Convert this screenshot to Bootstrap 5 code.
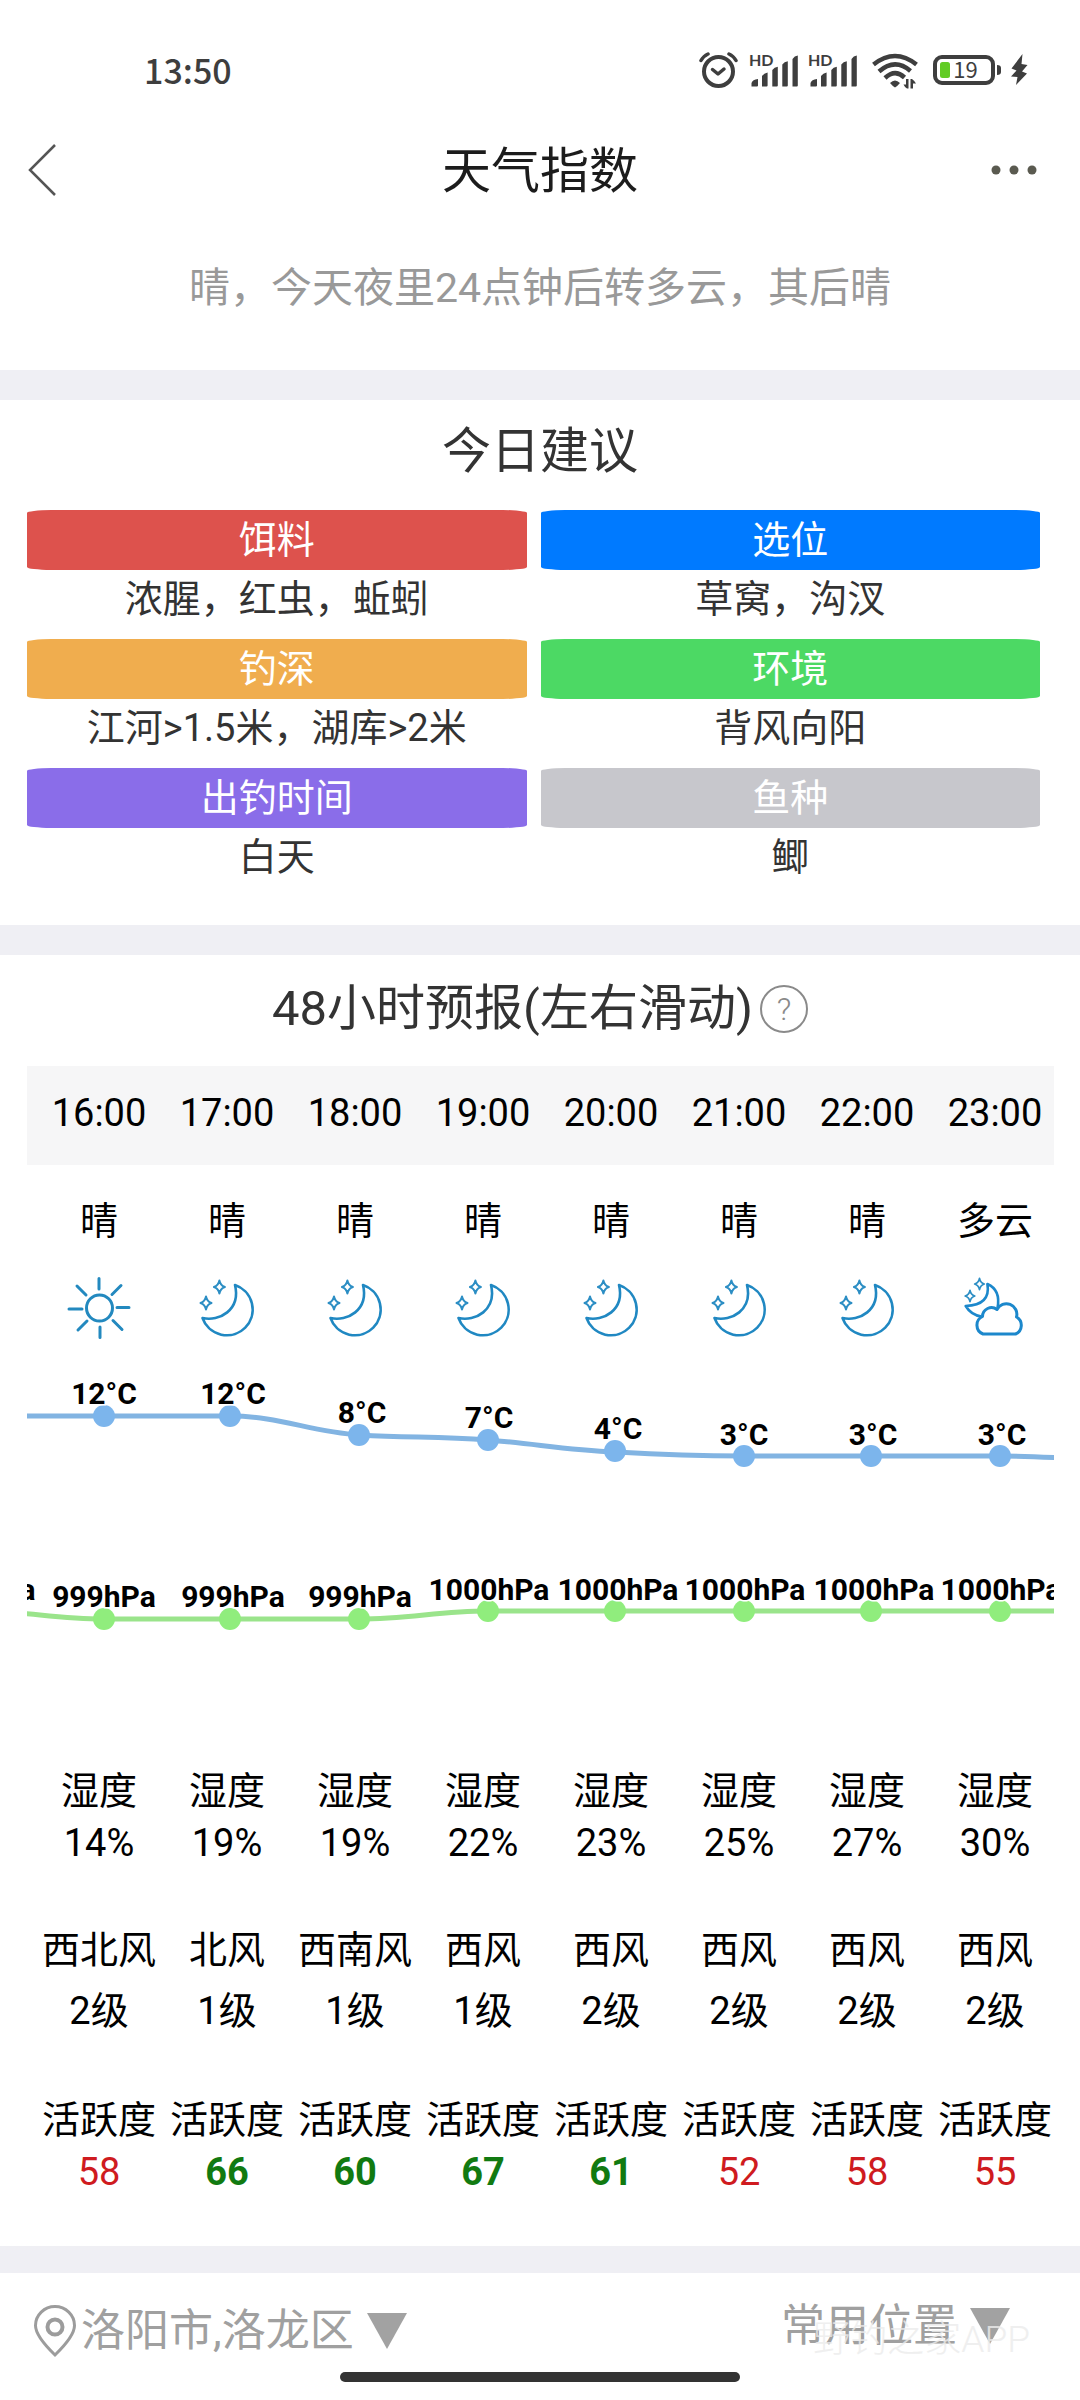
<!DOCTYPE html>
<html lang="zh-CN">
<head>
<meta charset="utf-8">
<meta name="viewport" content="width=device-width, initial-scale=1">
<title>天气指数</title>
<link rel="stylesheet" href="https://cdn.jsdelivr.net/npm/bootstrap@5.3.0/dist/css/bootstrap.min.css">
<style>
  body { font-family: Roboto, "Noto Sans CJK SC", sans-serif; color: #333; background: #fff; }
  svg { display: block; flex-shrink: 0; }
  .status-bar { height: 140px; padding: 0 52px 0 144px; color: #3e3e3e; }
  .status-time { font: 500 34px/44px "Noto Sans CJK SC", sans-serif; }
  .status-icons { gap: 10px; }
  .status-icons text { font-family: Lato, sans-serif; font-size: 16px; font-weight: 700; fill: #3e3e3e; }
  .status-icons .level { font-family: "Noto Sans CJK SC", sans-serif; font-size: 22px; font-weight: 400; text-anchor: middle; }
  .title-bar { height: 64px; padding: 0 28px; }
  .title-bar h1 { font-size: 49px; line-height: 64px; font-weight: 400; color: #1c1c1c; }
  .bar-side { flex: 1 1 0; }
  .summary { font-size: 41px; line-height: 60px; padding: 54px 24px 52px; color: #999; }
  .divider { height: 30px; background: #efeff4; }
  .divider-foot { height: 27px; }
  .section-title { font-size: 49px; line-height: 60px; font-weight: 400; color: #333; }
  .title-tips { padding: 22px 0 28px; }
  .title-hours { padding: 24px 0 27px; gap: 7px; }
  .help-btn { width: 48px; height: 48px; border: 2px solid #8a8a8a; color: #8a8a8a; font-size: 32px; line-height: 44px; font-weight: 300; background: none; }
  .tips { display: grid; grid-template-columns: 1fr 1fr; gap: 11px 14px; padding: 0 40px 39px 27px; }
  .tip-label { height: 60px; line-height: 60px; font-size: 38px; font-weight: 400; color: #fff; border-radius: 24px / 3px; }
  .tip-text { line-height: 58px; font-size: 38px; color: #333; }
  .bait { background: #dd524d; } .spot { background: #007aff; } .depth { background: #f0ad4e; }
  .place { background: #4cd964; } .when { background: #8a6de9; } .fish { background: #c7c7cc; }
  .hours { margin: 0 26px 0 27px; overflow-x: auto; scrollbar-width: none; }
  .hours::-webkit-scrollbar { display: none; }
  .hours table { width: 1024px; margin-left: 8px; table-layout: fixed; font-size: 38px; color: #000; --bs-table-color: #000; --bs-table-bg: transparent; }
  .hours th, .hours td { padding: 0; font-weight: 400; text-align: center; vertical-align: middle; white-space: nowrap; }
  .hours thead th { height: 99px; padding-bottom: 4px; background: #f6f6f7; }
  .hours thead { box-shadow: -8px 0 0 #f6f6f7; }
  .row-sky td { height: 112px; }
  .row-icon td { height: 62px; }
  .row-icon svg { width: 64px; height: 62px; margin: 0 auto; }
  .row-humidity td { line-height: 52px; padding: 28px 0; }
  .row-wind td { line-height: 61px; padding: 23px 0; }
  .row-active td { line-height: 52px; padding: 29px 0 48px; }
  .low { color: #cf1b20; } .high { color: #117a11; font-weight: 700; }
  .trend { width: 1024px; height: 398px; overflow: visible; }
  .trend text { font: 700 30px Roboto, sans-serif; text-anchor: middle; fill: #000; stroke: #fff; stroke-width: 3px; paint-order: stroke; }
  .foot { height: 99px; padding: 23px 67px 0 33px; }
  .place-btn { border: 0; background: none; padding: 0; font-size: 44px; line-height: 60px; color: #a0a0a0; }
  .current { padding-top: 5px; }
  .watermark { position: absolute; right: 50px; top: 45px; font-size: 37px; line-height: 44px; font-weight: 300; color: #ececec; opacity: .8; pointer-events: none; }
  .home-bar { width: 37%; height: 10px; margin: 0 auto 17px; background: #333; }
</style>
</head>
<body>
<svg width="0" height="0" class="position-absolute" aria-hidden="true">
  <symbol id="bars" viewBox="0 0 49 44">
    <path fill="#3e3e3e" d="M2.500 38.500V35q1-3.500 6.500-4v6.500q0 1-1 1zM13 38.500V28q2-3 5.600-3.500v13q0 1-1 1H13zM23.300 38.500V22q2-3 5.500-3.200v18.700q0 1-1 1h-4.500zM33.300 38.500V16.500q2-3 5.500-3.200v24.200q0 1-1 1h-4.500zM43.500 38.500V11q2-3 5.300-3.400v29.900q0 1-1 1h-4.300z"/>
  </symbol>
  <symbol id="star" viewBox="-8 -9 16 18">
    <path d="M0-6.500Q1-1.500 5.500 0 1 1.500 0 6.500-1 1.500-5.500 0-1-1.500 0-6.500z" fill="none" stroke="#2c8ec4" stroke-width="2" stroke-linejoin="round"/>
  </symbol>
  <symbol id="moon" viewBox="0 1 64 62">
    <path d="M40 9A25.800 25.800 0 1 1 7.500 42C24 46 46 34 40 9z" fill="none" stroke="#2088c2" stroke-width="2.600" stroke-linejoin="round"/>
    <use href="#star" x="16.400" y="2" width="16" height="18"/>
    <use href="#star" x="3" y="18" width="16" height="18"/>
  </symbol>
  <symbol id="sun" viewBox="0 1 64 62">
    <g fill="none" stroke="#2389bf" stroke-width="3" stroke-linecap="round">
      <circle cx="32.500" cy="32" r="13"/>
      <path d="M32 2.500v10.500M33 51v10.500M2 33h13M50 31.500h12M10 10l9 9M54 9.500l-9 9M11 54l9-9M55 53.500l-9-9"/>
    </g>
  </symbol>
  <symbol id="cloudy" viewBox="0 1 64 62">
    <g fill="none" stroke="#1c88cc" stroke-linejoin="round">
      <path d="M34.500 32Q38 14 24.400 8 28 29 2.700 30 8 39 18.500 40.500" stroke-width="2.600"/>
      <path d="M20 58A9.500 9.500 0 0 1 19.500 40.500A9 9 0 0 1 34 33.500A10.500 10.500 0 0 1 53.500 41A9.500 9.500 0 0 1 52.500 58z" stroke-width="3"/>
    </g>
    <use href="#star" x="9.500" y="0" width="14" height="16"/>
    <use href="#star" x="0" y="12" width="14" height="16"/>
  </symbol>
</svg>

<div class="status-bar d-flex align-items-center justify-content-between">
  <span class="status-time">13:50</span>
  <div class="status-icons d-flex align-items-center">
    <svg width="40" height="44" viewBox="0 0 40 44" fill="none" stroke="#3e3e3e" stroke-width="4" stroke-linecap="round" stroke-linejoin="round"><circle cx="19.500" cy="23.500" r="14.500"/><path d="M13.500 21.500l5.500 4.500 6-5" stroke-width="3.500"/><path d="M2 12.500Q4.500 8 9 6M37 12.500Q34.500 8 30 6" stroke-width="3.500"/></svg>
    <svg width="49" height="44"><use href="#bars"/><text x="0" y="18">HD</text></svg>
    <svg width="49" height="44"><use href="#bars"/><text x="0" y="18">HD</text></svg>
    <svg width="56" height="44" viewBox="-5 0 56 44"><g fill="none" stroke="#3e3e3e" stroke-width="4.500"><path d="M1.500 16.500Q23-.500 44.500 16.500M7 23.500Q23 9.500 38.500 23M13 30Q23 20.500 32.500 29.500"/></g><path fill="#3e3e3e" d="M23 39.500q-2.500-1.500-5-4.500 5-5 10 0-2.500 3-5 4.500zM36.500 31v9.500h-1.500q-2.500-1.500-3.500-4h2.500V31zM38.500 40.500V31H40q2.500 1.500 4 4.500h-3v5z"/></svg>
    <svg width="68" height="44" viewBox="0 0 68 44"><rect x="2" y="9" width="58" height="26" rx="7" fill="none" stroke="#3e3e3e" stroke-width="4"/><rect x="7" y="14" width="10" height="16" rx="2.500" fill="#62cc25"/><path d="M64 17q4 0 4 3v4q0 3-4 3z" fill="#3e3e3e"/><text class="level" x="32.500" y="30">19</text></svg>
    <svg width="17" height="44" viewBox="0 0 17 44"><path d="M11.500 6L.500 20.500l5 2L0 28.500l6.500.500L5 37 16 25.500l-5-2 5.500-6.500-6-1z" fill="#3e3e3e"/></svg>
  </div>
</div>

<header class="title-bar d-flex align-items-center">
  <div class="bar-side d-flex"><button type="button" class="btn p-0 border-0" aria-label="返回"><svg width="40" height="60" viewBox="0 0 40 60" fill="none" stroke="#555" stroke-width="2.500"><path d="M27 3L2 28l25 25"/></svg></button></div>
  <h1 class="m-0">天气指数</h1>
  <div class="bar-side d-flex justify-content-end"><button type="button" class="btn p-0 border-0" aria-label="更多"><svg width="62" height="20" viewBox="0 0 62 20" fill="#5a5a50"><circle cx="6" cy="8" r="4.500"/><circle cx="24" cy="8" r="4.500"/><circle cx="42" cy="8" r="4.500"/></svg></button></div>
</header>
<p class="summary text-center m-0">晴，今天夜里24点钟后转多云，其后晴</p>

<div class="divider"></div>
<section>
  <h2 class="section-title title-tips text-center m-0">今日建议</h2>
  <div class="tips text-center">
    <div><h3 class="tip-label bait m-0">饵料</h3><div class="tip-text">浓腥，红虫，蚯蚓</div></div>
    <div><h3 class="tip-label spot m-0">选位</h3><div class="tip-text">草窝，沟汊</div></div>
    <div><h3 class="tip-label depth m-0">钓深</h3><div class="tip-text">江河&gt;1.5米，湖库&gt;2米</div></div>
    <div><h3 class="tip-label place m-0">环境</h3><div class="tip-text">背风向阳</div></div>
    <div><h3 class="tip-label when m-0">出钓时间</h3><div class="tip-text">白天</div></div>
    <div><h3 class="tip-label fish m-0">鱼种</h3><div class="tip-text">鲫</div></div>
  </div>
</section>

<div class="divider"></div>
<section>
  <div class="title-hours d-flex align-items-center justify-content-center">
    <h2 class="section-title m-0">48小时预报(左右滑动)</h2>
    <button type="button" class="help-btn rounded-circle p-0" aria-label="说明">?</button>
  </div>
  <div class="hours">
    <table class="table table-borderless mb-0">
      <thead><tr><th scope="col">16:00</th><th scope="col">17:00</th><th scope="col">18:00</th><th scope="col">19:00</th><th scope="col">20:00</th><th scope="col">21:00</th><th scope="col">22:00</th><th scope="col">23:00</th></tr></thead>
      <tbody>
        <tr class="row-sky"><td>晴</td><td>晴</td><td>晴</td><td>晴</td><td>晴</td><td>晴</td><td>晴</td><td>多云</td></tr>
        <tr class="row-icon">
          <td><svg><use href="#sun"/></svg></td><td><svg><use href="#moon"/></svg></td><td><svg><use href="#moon"/></svg></td><td><svg><use href="#moon"/></svg></td>
          <td><svg><use href="#moon"/></svg></td><td><svg><use href="#moon"/></svg></td><td><svg><use href="#moon"/></svg></td><td><svg><use href="#cloudy"/></svg></td>
        </tr>
        <tr><td colspan="8">
          <svg class="trend" viewBox="0 0 1024 398">
            <path fill="none" stroke="#82b4e2" stroke-width="5" d="M-59 77H195C245 77 275 93 325 96C375 99 403 97 453 101C503 105 530 111 581 113C632 116 659 117 709 117H965C1015 117 1043 121 1093 121"/>
            <g fill="#7cb5ec"><circle cx="69" cy="77" r="11"/><circle cx="195" cy="77" r="11"/><circle cx="324" cy="96" r="11"/><circle cx="453" cy="101" r="11"/><circle cx="580" cy="112" r="11"/><circle cx="709" cy="117" r="11"/><circle cx="836" cy="117" r="11"/><circle cx="965" cy="117" r="11"/></g>
            <path fill="none" stroke="#9ae48b" stroke-width="5" d="M-59 272C-9 272 19 280 69 280H324C375 280 403 272 453 272H1093"/>
            <g fill="#90ed7d"><circle cx="69" cy="280" r="11"/><circle cx="195" cy="280" r="11"/><circle cx="324" cy="280" r="11"/><circle cx="453" cy="272" r="11"/><circle cx="580" cy="272" r="11"/><circle cx="709" cy="272" r="11"/><circle cx="836" cy="272" r="11"/><circle cx="965" cy="272" r="11"/></g>
            <text x="69" y="65">12°C</text><text x="198" y="65">12°C</text><text x="327" y="84">8°C</text><text x="454" y="89">7°C</text><text x="583" y="100">4°C</text><text x="709" y="106">3°C</text><text x="838" y="106">3°C</text><text x="967" y="106">3°C</text>
            <text x="-60" y="261">1000hPa</text><text x="69" y="268">999hPa</text><text x="198" y="268">999hPa</text><text x="325" y="268">999hPa</text><text x="454" y="261">1000hPa</text><text x="583" y="261">1000hPa</text><text x="710" y="261">1000hPa</text><text x="839" y="261">1000hPa</text><text x="966" y="261">1000hPa</text>
          </svg>
        </td></tr>
        <tr class="row-humidity"><td>湿度<br>14%</td><td>湿度<br>19%</td><td>湿度<br>19%</td><td>湿度<br>22%</td><td>湿度<br>23%</td><td>湿度<br>25%</td><td>湿度<br>27%</td><td>湿度<br>30%</td></tr>
        <tr class="row-wind"><td>西北风<br>2级</td><td>北风<br>1级</td><td>西南风<br>1级</td><td>西风<br>1级</td><td>西风<br>2级</td><td>西风<br>2级</td><td>西风<br>2级</td><td>西风<br>2级</td></tr>
        <tr class="row-active"><td>活跃度<br><span class="low">58</span></td><td>活跃度<br><span class="high">66</span></td><td>活跃度<br><span class="high">60</span></td><td>活跃度<br><span class="high">67</span></td><td>活跃度<br><span class="high">61</span></td><td>活跃度<br><span class="low">52</span></td><td>活跃度<br><span class="low">58</span></td><td>活跃度<br><span class="low">55</span></td></tr>
      </tbody>
    </table>
  </div>
</section>

<div class="divider divider-foot"></div>
<footer>
  <div class="foot position-relative d-flex justify-content-between align-items-start">
    <button type="button" class="place-btn current d-flex align-items-center">
      <svg width="44" height="54" viewBox="0 0 44 54" fill="none" stroke="#9c9c9c" stroke-width="3"><path d="M22 51Q2.500 32 2.500 21.500a19.500 19 0 0 1 39 0Q41.500 32 22 51z"/><circle cx="22" cy="23" r="7.500" stroke-width="4"/></svg>
      <span class="ms-1">洛阳市,洛龙区</span>
      <svg class="ms-2" width="48" height="38" viewBox="0 0 48 38"><path d="M5 1h40L25 37z" fill="#a2a2a2"/></svg>
    </button>
    <button type="button" class="place-btn d-flex align-items-center">
      <span>常用位置</span>
      <svg class="ms-2" width="48" height="38" viewBox="0 0 48 38"><path d="M5 1h40L25 37z" fill="#a2a2a2"/></svg>
    </button>
    <span class="watermark">野钓之家APP</span>
  </div>
  <div class="home-bar rounded-pill"></div>
</footer>
<script src="https://cdn.jsdelivr.net/npm/bootstrap@5.3.0/dist/js/bootstrap.bundle.min.js"></script>
</body>
</html>
